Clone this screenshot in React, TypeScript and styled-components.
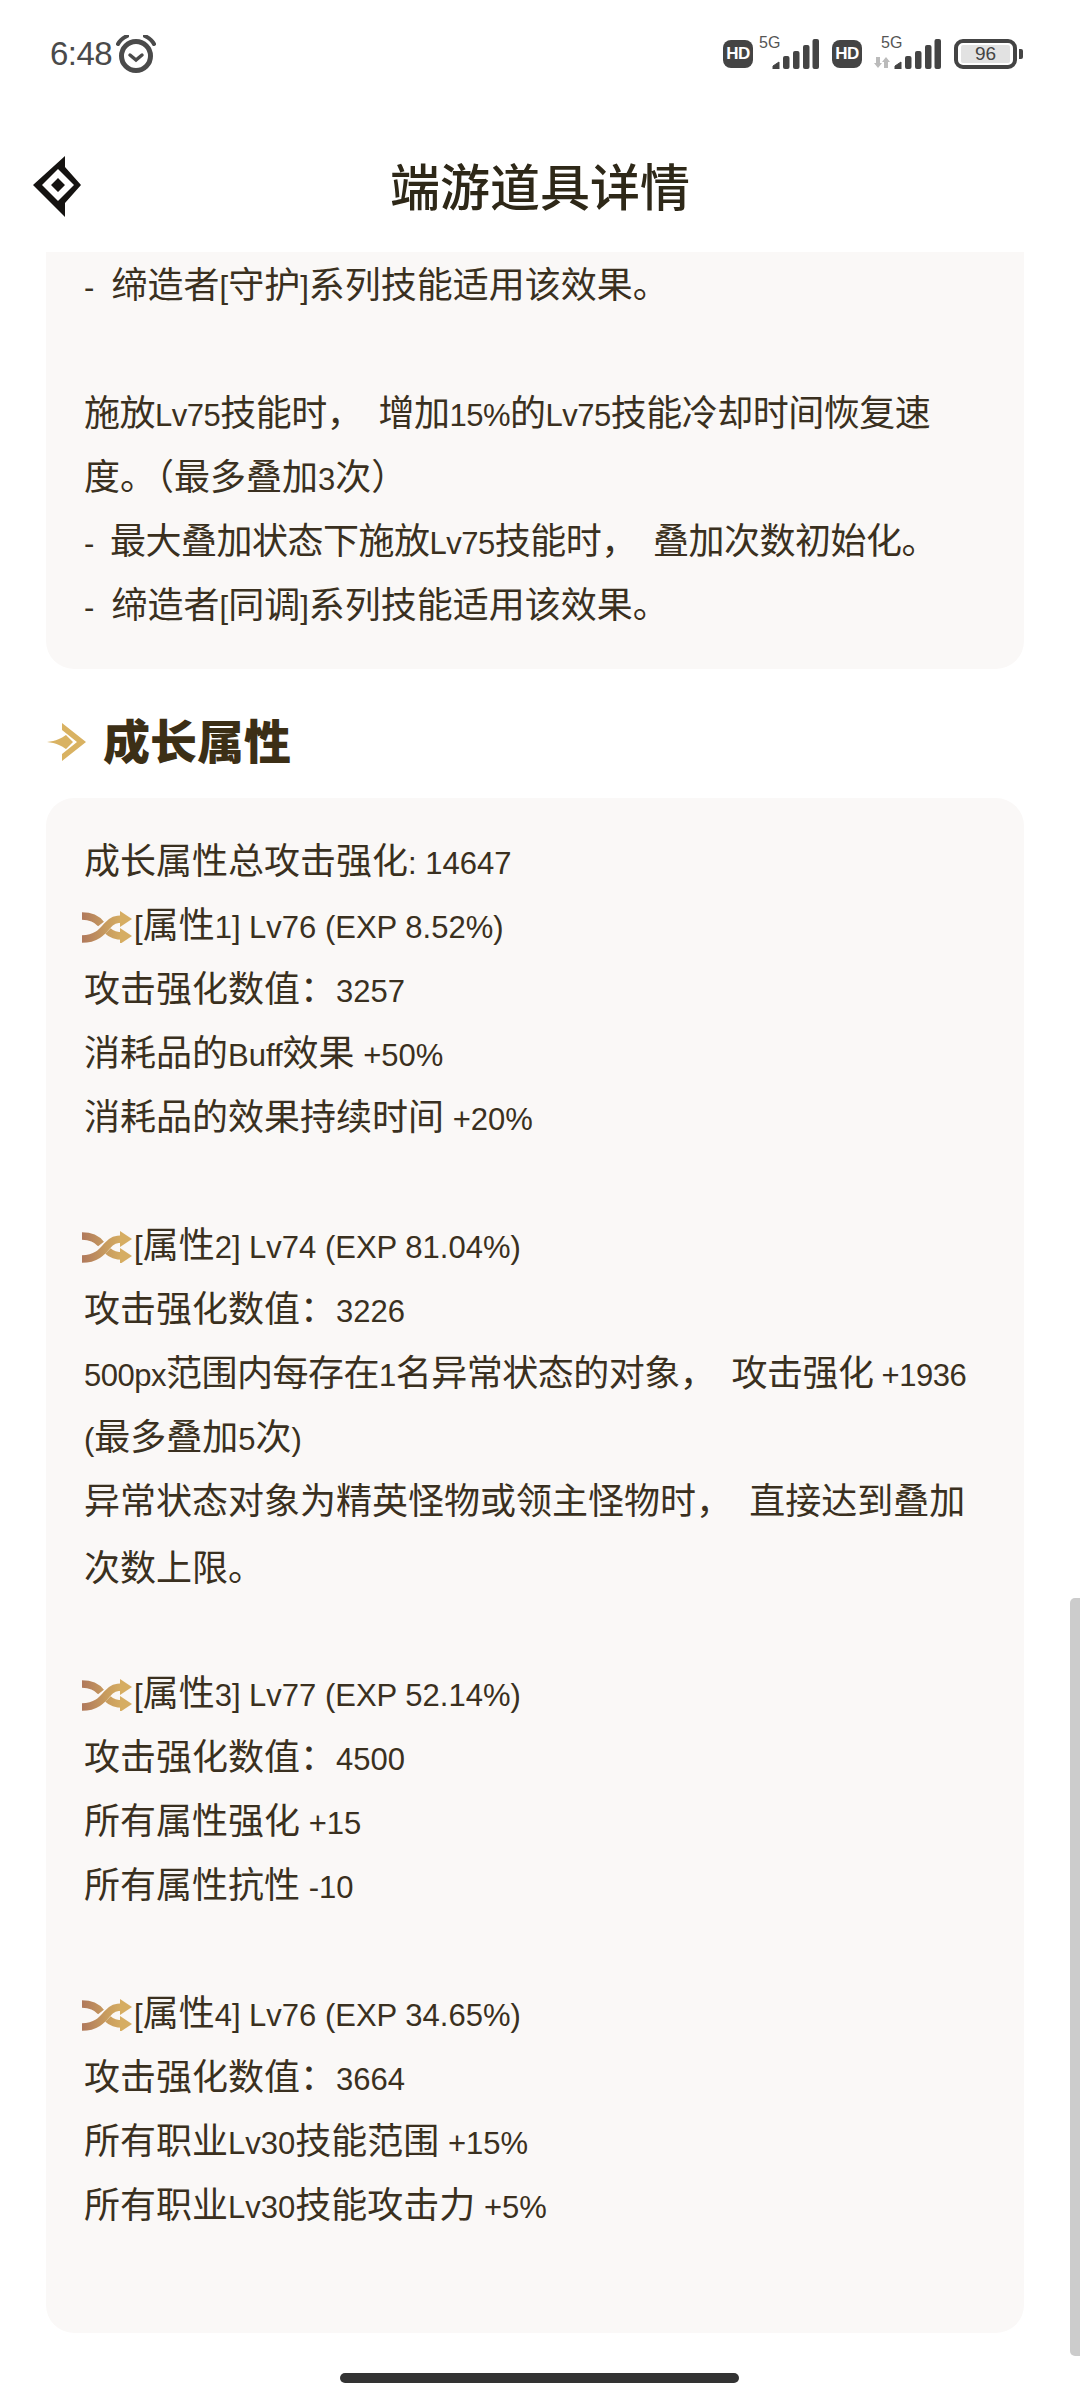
import React from 'react';
import styled, { createGlobalStyle } from 'styled-components';

const GlobalStyle = createGlobalStyle`
  html, body {
    margin: 0;
    padding: 0;
    background: #fff;
  }
  * {
    box-sizing: border-box;
  }
`;

const Page = styled.div`
  position: relative;
  width: 1080px;
  height: 2400px;
  overflow: hidden;
  background: #fff;
  font-family: "Noto Sans CJK SC", "Liberation Sans", sans-serif;
  color: #3a3020;
`;

const StatusBar = styled.div`
  height: 120px;
  padding: 0 57px 12px 50px;
  display: flex;
  align-items: center;
  justify-content: space-between;
  color: #444;
`;

const StatusLeft = styled.div`
  display: flex;
  align-items: center;
  gap: 4px;
`;

const Clock = styled.span`
  font: 400 33px/40px "Liberation Sans", sans-serif;
  letter-spacing: -0.5px;
  color: #4a4a4a;
`;

const StatusRight = styled.div`
  display: flex;
  align-items: center;
`;

const HdBadge = styled.span`
  width: 30px;
  height: 28px;
  border-radius: 8px;
  background: #444;
  color: #fff;
  font: 700 17px/28px "Liberation Sans", sans-serif;
  letter-spacing: -0.5px;
  text-align: center;
`;

const SignalGroup = styled.span<{ $wide?: boolean }>`
  position: relative;
  display: flex;
  justify-content: flex-end;
  width: ${(p) => (p.$wide ? 79 : 66)}px;
  height: 30px;
  margin-right: 13px;
`;

const NetLabel = styled.span<{ $wide?: boolean }>`
  position: absolute;
  top: -5px;
  left: ${(p) => (p.$wide ? 19 : 6)}px;
  font: 400 16px/18px "Liberation Sans", sans-serif;
  color: #555;
`;

const DataArrows = styled.svg`
  position: absolute;
  left: 12px;
  bottom: 1px;
`;

const Battery = styled.span`
  display: flex;
  align-items: center;
  gap: 2px;
`;

const BatteryBody = styled.span`
  width: 63px;
  height: 30px;
  padding: 2px 3px;
  border: 4px solid #444;
  border-radius: 9px;
`;

const BatteryLevel = styled.span`
  display: block;
  height: 100%;
  background: #e2e2e2;
  border-radius: 2px;
  color: #444;
  font: 400 19px/18px "Liberation Sans", sans-serif;
  text-align: center;
`;

const BatteryNub = styled.span`
  width: 4px;
  height: 10px;
  background: #444;
  border-radius: 0 2px 2px 0;
`;

const NavBar = styled.div`
  height: 132px;
  padding: 0 33px;
  display: grid;
  grid-template-columns: 1fr auto 1fr;
  align-items: center;
`;

const NavTitle = styled.h1`
  margin: 0 0 4px;
  font-size: 50px;
  line-height: 60px;
  font-weight: 500;
  color: #2e2818;
`;

const TopCard = styled.div`
  width: 978px;
  margin-left: 46px;
  padding: 1px 38px 32px;
  background: #faf8f7;
  border-radius: 0 0 28px 28px;
`;

const SectionHead = styled.div`
  height: 129px;
  padding: 16px 46px 0;
  display: flex;
  align-items: center;
  gap: 17px;
`;

const SectionTitle = styled.h2`
  margin: 0 0 6px;
  font-size: 47px;
  line-height: 60px;
  font-weight: 900;
  color: #3c2f16;
`;

const Card = styled.div`
  width: 978px;
  margin-left: 46px;
  padding: 31px 38px 32px;
  background: #faf8f7;
  border-radius: 28px;
`;

const Line = styled.div<{ $tight?: boolean }>`
  display: flex;
  align-items: center;
  height: 64px;
  font-size: 36px;
  line-height: 64px;
  white-space: pre;
  letter-spacing: ${(p) => (p.$tight ? '-0.5px' : '0')};
`;

const Latin = styled.span`
  font-family: "Liberation Sans", sans-serif;
  font-size: 31px;
`;

const AttrIcon = styled.svg`
  flex: none;
  width: 50px;
  height: 32px;
  margin: 4px 2px 0 -2px;
`;

const Scrollbar = styled.div`
  position: absolute;
  right: 0;
  top: 1598px;
  width: 10px;
  height: 758px;
  background: #ccc;
  border-radius: 5px 0 0 5px;
`;

const HomeBar = styled.div`
  position: absolute;
  left: 340px;
  top: 2373px;
  width: 399px;
  height: 10px;
  border-radius: 5px;
  background: #333;
`;

const AlarmIcon = () => (
  <svg width="40" height="38" viewBox="0 0 40 38">
    <circle cx="20" cy="21" r="14.5" fill="none" stroke="#4a4a4a" strokeWidth="5" />
    <path d="M14 20l6 5 6-5" fill="none" stroke="#4a4a4a" strokeWidth="3.5" strokeLinecap="round" />
    <path d="M2 9C4 5 7 3 11 1M38 9C36 5 33 3 29 1" fill="none" stroke="#4a4a4a" strokeWidth="4" strokeLinecap="round" />
  </svg>
);

const SignalBars = () => (
  <svg width="47" height="30" viewBox="0 0 47 30">
    <path d="M1 30v-3l6-4v7z" fill="#444" stroke="#444" strokeLinejoin="round" />
    <rect x="11" y="17" width="6.5" height="13" rx="2" fill="#444" />
    <rect x="21" y="12" width="6.5" height="18" rx="2" fill="#444" />
    <rect x="31" y="6" width="6.5" height="24" rx="2" fill="#444" />
    <rect x="40.5" y="0" width="6.5" height="30" rx="2" fill="#444" />
  </svg>
);

const Logo = () => (
  <svg width="48" height="61" viewBox="0 0 48 61">
    <path
      fillRule="evenodd"
      fill="#151311"
      d="M32 0V11L48 29 32 47V61L0 29ZM25 13 9 29 25 45 41 29ZM25 22 32 29 25 36 18 29Z"
    />
  </svg>
);

const SectionArrow = () => (
  <svg width="40" height="38" viewBox="0 0 40 38">
    <path d="M1 19C10 18 16 15 20 12L27 19 20 26C16 23 10 20 1 19Z" fill="#d9b262" />
    <path d="M16 0 40 19 16 38V31L31 19 16 7Z" fill="#d9b262" />
  </svg>
);

const ShuffleIcon = ({ id }: { id: string }) => (
  <AttrIcon viewBox="0 0 50 32">
    <defs>
      <linearGradient id={id} x1="0" x2="1" y1="0" y2="0">
        <stop offset="0" stopColor="#b0795c" />
        <stop offset="0.6" stopColor="#c89c5e" />
        <stop offset="1" stopColor="#d6ad62" />
      </linearGradient>
    </defs>
    <path
      d="M0 5C10 5 15 8 19 13M0 28C14 28 20 21 25 15 30 9 34 8 41 8M26 20C30 24 34 25 41 25"
      fill="none"
      stroke={`url(#${id})`}
      strokeWidth="7.5"
    />
    <path d="M38 0 50 8 38 16ZM38 17 50 25 38 33Z" fill="#d6ad62" />
  </AttrIcon>
);

// Latin runs are set smaller than the Chinese around them, as in the picture
const MixedText = ({ text }: { text: string }) => (
  <span>
    {text.split(/([\x00-\x7f]+)/).map((part, i) =>
      i % 2 === 1 ? <Latin key={i}>{part}</Latin> : part
    )}
  </span>
);

type TextLine = { text: string; attr?: boolean; tight?: boolean };

const topLines: TextLine[] = [
  { text: '-  缔造者[守护]系列技能适用该效果。' },
  { text: '' },
  { text: '施放Lv75技能时，  增加15%的Lv75技能冷却时间恢复速', tight: true },
  { text: '度。（最多叠加3次）' },
  { text: '-  最大叠加状态下施放Lv75技能时，  叠加次数初始化。', tight: true },
  { text: '-  缔造者[同调]系列技能适用该效果。' },
];

const attrLines: TextLine[] = [
  { text: '成长属性总攻击强化: 14647' },
  { text: '[属性1] Lv76 (EXP 8.52%)', attr: true },
  { text: '攻击强化数值：3257' },
  { text: '消耗品的Buff效果 +50%' },
  { text: '消耗品的效果持续时间 +20%' },
  { text: '' },
  { text: '[属性2] Lv74 (EXP 81.04%)', attr: true },
  { text: '攻击强化数值：3226' },
  { text: '500px范围内每存在1名异常状态的对象，  攻击强化 +1936', tight: true },
  { text: '(最多叠加5次)' },
  { text: '异常状态对象为精英怪物或领主怪物时，  直接达到叠加' },
  { text: '次数上限。' },
  { text: '' },
  { text: '[属性3] Lv77 (EXP 52.14%)', attr: true },
  { text: '攻击强化数值：4500' },
  { text: '所有属性强化 +15' },
  { text: '所有属性抗性 -10' },
  { text: '' },
  { text: '[属性4] Lv76 (EXP 34.65%)', attr: true },
  { text: '攻击强化数值：3664' },
  { text: '所有职业Lv30技能范围 +15%' },
  { text: '所有职业Lv30技能攻击力 +5%' },
  { text: '' },
];

const App: React.FC = () => {
  return (
    <Page>
      <GlobalStyle />
      <StatusBar>
        <StatusLeft>
          <Clock>6:48</Clock>
          <AlarmIcon />
        </StatusLeft>
        <StatusRight>
          <HdBadge>HD</HdBadge>
          <SignalGroup>
            <NetLabel>5G</NetLabel>
            <SignalBars />
          </SignalGroup>
          <HdBadge>HD</HdBadge>
          <SignalGroup $wide>
            <NetLabel $wide>5G</NetLabel>
            <DataArrows width="16" height="11" viewBox="0 0 16 11">
              <path d="M2 0H6V6H8L4 11 0 6H2ZM10 11V5H8L12 0 16 5H14V11Z" fill="#bbb" />
            </DataArrows>
            <SignalBars />
          </SignalGroup>
          <Battery>
            <BatteryBody>
              <BatteryLevel>96</BatteryLevel>
            </BatteryBody>
            <BatteryNub />
          </Battery>
        </StatusRight>
      </StatusBar>

      <NavBar>
        <Logo />
        <NavTitle>端游道具详情</NavTitle>
      </NavBar>

      <TopCard>
        {topLines.map((line, i) => (
          <Line key={i} $tight={line.tight}>
            <MixedText text={line.text} />
          </Line>
        ))}
      </TopCard>

      <SectionHead>
        <SectionArrow />
        <SectionTitle>成长属性</SectionTitle>
      </SectionHead>

      <Card>
        {attrLines.map((line, i) => (
          <Line key={i} $tight={line.tight}>
            {line.attr && <ShuffleIcon id={`shuffle-${i}`} />}
            <MixedText text={line.text} />
          </Line>
        ))}
      </Card>

      <Scrollbar />
      <HomeBar />
    </Page>
  );
};

export default App;
